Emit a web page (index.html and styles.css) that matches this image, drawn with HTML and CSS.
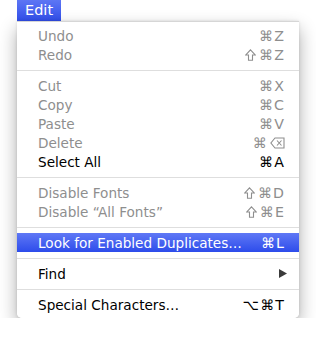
FILE: index.html
```html
<!DOCTYPE html>
<html>
<head>
<meta charset="utf-8">
<link rel="stylesheet" href="styles.css">
</head>
<body>
<div class="wrap">
  <div class="title">Edit</div>
  <div class="menu">
    <div class="item disabled"><span class="label">Undo</span><span class="key">⌘Z</span></div>
    <div class="item disabled"><span class="label">Redo</span><span class="key"><svg class="shift" viewBox="0 0 11 12" width="11" height="12"><path d="M5.5 0.8 L10.2 6 L7.5 6 L7.5 11.2 L3.5 11.2 L3.5 6 L0.8 6 Z"/></svg>⌘Z</span></div>
    <div class="sep"></div>
    <div class="item disabled"><span class="label">Cut</span><span class="key">⌘X</span></div>
    <div class="item disabled"><span class="label">Copy</span><span class="key">⌘C</span></div>
    <div class="item disabled"><span class="label">Paste</span><span class="key">⌘V</span></div>
    <div class="item disabled"><span class="label">Delete</span><span class="key">⌘<svg class="del" viewBox="0 0 15 12" width="15" height="12"><path d="M5 1 L14 1 L14 11 L5 11 L0.9 6 Z"/><path d="M7 3.5 L11.5 8.5 M11.5 3.5 L7 8.5"/></svg></span></div>
    <div class="item"><span class="label">Select All</span><span class="key">⌘A</span></div>
    <div class="sep"></div>
    <div class="item disabled"><span class="label">Disable Fonts</span><span class="key"><svg class="shift" viewBox="0 0 11 12" width="11" height="12"><path d="M5.5 0.8 L10.2 6 L7.5 6 L7.5 11.2 L3.5 11.2 L3.5 6 L0.8 6 Z"/></svg>⌘D</span></div>
    <div class="item disabled"><span class="label">Disable “All Fonts”</span><span class="key"><svg class="shift" viewBox="0 0 11 12" width="11" height="12"><path d="M5.5 0.8 L10.2 6 L7.5 6 L7.5 11.2 L3.5 11.2 L3.5 6 L0.8 6 Z"/></svg>⌘E</span></div>
    <div class="sep"></div>
    <div class="item selected"><span class="label">Look for Enabled Duplicates…</span><span class="key">⌘L</span></div>
    <div class="sep"></div>
    <div class="item"><span class="label">Find</span><svg class="arrow" viewBox="0 0 8 9" width="8" height="9"><path d="M0 0 L8 4.5 L0 9 Z"/></svg></div>
    <div class="sep"></div>
    <div class="item"><span class="label">Special Characters…</span><span class="key">⌥⌘T</span></div>
  </div>
</div>
</body>
</html>
```

FILE: styles.css
```css
html, body {
  margin: 0;
  padding: 0;
  background: #ffffff;
}
body {
  font-family: "DejaVu Sans", "Liberation Sans", sans-serif;
  font-size: 13.6px;
  color: #000;
}
.wrap {
  padding-left: 17px;
  width: 282px;
}
.title {
  width: 44px;
  height: 22px;
  box-sizing: border-box;
  padding-left: 8px;
  line-height: 21px;
  color: #fff;
  font-size: 14.5px;
  background: linear-gradient(#5d76f4, #2f4deb);
}
.menu {
  width: 282px;
  box-sizing: border-box;
  padding: 4px 0;
  background: rgba(255,255,255,0.97);
  border-top: 1px solid #d6d6d6;
  margin-top: -1px;
  border-radius: 0 0 5px 5px;
  box-shadow: 0 8px 18px rgba(0,0,0,0.33), 0 0 3px rgba(0,0,0,0.12);
}
.item {
  display: flex;
  align-items: center;
  height: 19px;
  padding: 0 15px 0 21px;
}
.label {
  flex: 1;
  white-space: nowrap;
}
.key {
  display: flex;
  align-items: center;
  font-size: 14.2px;
  letter-spacing: 1px;
  margin-right: -1px;
}
.shift {
  fill: none;
  stroke: currentColor;
  stroke-width: 1.1;
  margin-right: 3px;
}
.del {
  fill: none;
  stroke: currentColor;
  stroke-width: 1.1;
  margin-left: 2px;
}
.disabled {
  color: #8e8e8e;
}
.selected {
  color: #fff;
  background: linear-gradient(#5f78f5, #2d4ceb);
}
.arrow {
  fill: #3a3a3a;
  margin-right: -3px;
}
.sep {
  height: 12px;
  display: flex;
  align-items: center;
}
.sep::before {
  content: "";
  display: block;
  width: 100%;
  height: 1px;
  background: #dedede;
}
```
